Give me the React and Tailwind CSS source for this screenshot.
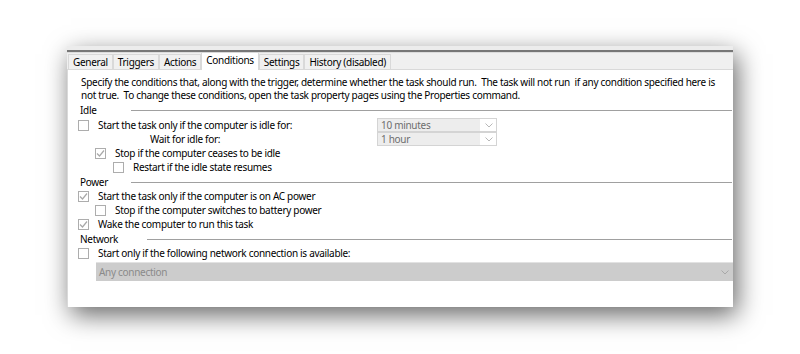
import React from 'react';

const tabs = ['General', 'Triggers', 'Actions', 'Conditions', 'Settings', 'History (disabled)'];

function Box({ checked }) {
  return (
    <span className="w-[11px] h-[11px] border border-[#adadad] bg-white flex items-center justify-center shrink-0">
      {checked && (
        <svg width="9" height="9" viewBox="0 0 9 9">
          <path d="M1 4.5 L3.5 7 L8 1.5" fill="none" stroke="#a8a8a8" strokeWidth="1.2" />
        </svg>
      )}
    </span>
  );
}

function Check({ indent = 0, checked, children }) {
  const pad = ['pl-0', 'pl-[17px]', 'pl-[35px]'][indent];
  return (
    <div className={`flex items-center h-[14px] ${pad}`}>
      <Box checked={checked} />
      <span className="ml-[9px] whitespace-nowrap">{children}</span>
    </div>
  );
}

function Group({ label, lineLeft }) {
  return (
    <div className="flex items-center h-[14px] pl-[2px]">
      <span className="whitespace-nowrap" style={{ width: lineLeft }}>{label}</span>
      <span className="flex-1 h-px bg-[#a0a0a0] mr-[1px]" />
    </div>
  );
}

function Select({ text }) {
  return (
    <div className="w-[120px] h-[14px] border border-[#d4d4d4] flex items-center">
      <span className="w-[102px] h-[12px] bg-[#ededed] text-[#6d6d6d] leading-[12px] pl-[3px]">{text}</span>
      <svg className="ml-[5px]" width="8" height="5" viewBox="0 0 8 5">
        <path d="M0.5 0.5 L4 4 L7.5 0.5" fill="none" stroke="#b8b8b8" strokeWidth="1" />
      </svg>
    </div>
  );
}

export default function App() {
  return (
    <div className="w-[800px] h-[354px] bg-white overflow-hidden pt-[46px] pl-[67px]" style={{ fontFamily: '"Noto Sans", sans-serif' }}>
      <div className="w-[666px] h-[261px] bg-white flex flex-col text-[10px] tracking-[-0.3px] text-black shadow-[4px_8px_24px_rgba(0,0,0,0.6)] overflow-hidden">
        <div className="h-[4px] bg-[#ececec]" />
        <div className="h-[2px] bg-[#777777]" />
        <div className="h-[1px] bg-[#dcdcdc]" />
        <div className="h-[17px] bg-[#f0f0f0] flex items-end pl-[1px] border-b border-[#d9d9d9]">
          {tabs.map((t) => {
            const active = t === 'Conditions';
            return (
              <div
                key={t}
                className={`flex items-center px-[4px] border border-b-0 border-[#d9d9d9] whitespace-nowrap leading-none ${active ? 'h-[18px] bg-white -mb-px pb-[3px]' : 'h-[15px] bg-[#f0f0f0] pb-[1px]'}`}
              >
                {t}
              </div>
            );
          })}
        </div>
        <div className="flex-1 pl-[10px] pt-[6px] flex flex-col border-l border-[#d9d9d9]">
          <p className="pl-[3px] leading-[13px] whitespace-nowrap">
            Specify the conditions that, along with the trigger, determine whether the task should run.&nbsp; The task will not run&nbsp; if any condition specified here is
            <br />
            not true.&nbsp; To change these conditions, open the task property pages using the Properties command.
          </p>
          <div className="mt-[1px]">
            <Group label="Idle" lineLeft={51} />
          </div>
          <div className="flex items-center mt-[1px]">
            <div className="w-[299px]"><Check>Start the task only if the computer is idle for:</Check></div>
            <Select text="10 minutes" />
          </div>
          <div className="flex items-center">
            <div className="w-[299px] pl-[72px] h-[14px] leading-[14px]">Wait for idle for:</div>
            <Select text="1 hour" />
          </div>
          <Check indent={1} checked>Stop if the computer ceases to be idle</Check>
          <Check indent={2}>Restart if the idle state resumes</Check>
          <div className="mt-[1px]">
            <Group label="Power" lineLeft={51} />
          </div>
          <Check checked>Start the task only if the computer is on AC power</Check>
          <Check indent={1}>Stop if the computer switches to battery power</Check>
          <Check checked>Wake the computer to run this task</Check>
          <div className="mt-[1px]">
            <Group label="Network" lineLeft={67} />
          </div>
          <Check>Start only if the following network connection is available:</Check>
          <div className="ml-[18px] mt-[2px] h-[19px] bg-[#cccccc] border-t border-[#e2e2e2] flex items-center justify-between pr-[4px]">
            <span className="pl-[3px] text-[#8a8a8a]">Any connection</span>
            <svg width="8" height="5" viewBox="0 0 8 5">
              <path d="M0.5 0.5 L4 4 L7.5 0.5" fill="none" stroke="#a8a8a8" strokeWidth="1" />
            </svg>
          </div>
        </div>
      </div>
    </div>
  );
}
